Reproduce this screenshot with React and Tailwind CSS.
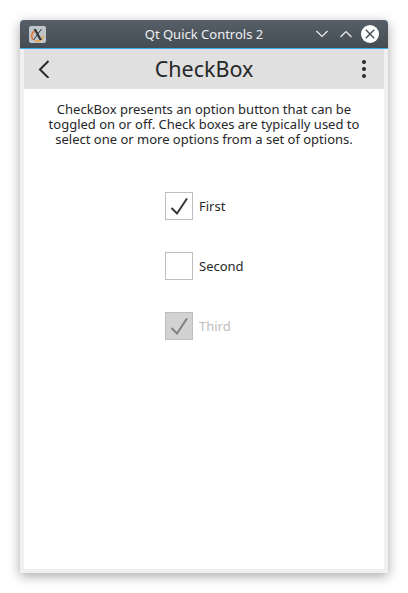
export default function App() {
  const Box = ({ checked, disabled }) => (
    <div className={`w-[28px] h-[28px] border flex items-center justify-center ${disabled ? "bg-[#d2d2d2] border-[#bdbdbd]" : "bg-white border-[#bdbdbd]"}`}>
      {checked && (
        <svg width="26" height="26" viewBox="0 0 26 26" fill="none">
          <path d="M5.5 15 L11 20.5 L21 5.5" stroke={disabled ? "#7f7f7f" : "#353637"} strokeWidth="2" />
        </svg>
      )}
    </div>
  );
  const Row = ({ label, checked, disabled }) => (
    <div className="flex items-center h-[28px] gap-[6px] w-[86px]">
      <Box checked={checked} disabled={disabled} />
      <span className={`text-[13px] leading-[18px] ${disabled ? "text-[#bdbebf]" : "text-[#26282a]"}`}>{label}</span>
    </div>
  );
  return (
    <div className="w-[408px] h-[593px] bg-white pl-[20px] pt-[20px] overflow-hidden" style={{ fontFamily: '"Noto Sans", sans-serif' }}>
      <div className="w-[368px] h-[553px] flex flex-col bg-[#eff0f1] rounded-t-[4px] shadow-[0_3px_12px_rgba(0,0,0,0.35)]">
        <div className="h-[29px] shrink-0 flex items-center pl-[9px] pr-[9px] rounded-t-[4px] border-b border-[#3daee9] bg-gradient-to-b from-[#565f67] to-[#454d54]">
          <div className="w-[17px] h-[17px] rounded-[2px] bg-[#bfc5c8] flex items-center justify-center">
            <svg width="15" height="15" viewBox="0 0 15 15" fill="none">
              <path d="M3 12.5 A5.5 5.5 0 0 1 4.5 4" stroke="#e8762d" strokeWidth="1.5" />
              <path d="M13 8.5 A5.5 5.5 0 0 1 5 13.5" stroke="#eda43a" strokeWidth="1.5" />
              <path d="M3.5 2 L6 2 L12 13 L9.5 13 Z" fill="#33383c" />
              <path d="M11.5 2 L3.5 13" stroke="#33383c" strokeWidth="1" />
            </svg>
          </div>
          <div className="flex-1 text-center text-[13px] leading-[18px] text-[#eff0f1] pl-[46px]">Qt Quick Controls 2</div>
          <svg width="12" height="8" viewBox="0 0 12 8" fill="none" className="mr-[12px]">
            <path d="M0.5 1 L6 6.5 L11.5 1" stroke="#eff0f1" strokeWidth="1.2" />
          </svg>
          <svg width="12" height="8" viewBox="0 0 12 8" fill="none" className="mr-[9px]">
            <path d="M0.5 7 L6 1.5 L11.5 7" stroke="#eff0f1" strokeWidth="1.2" />
          </svg>
          <div className="w-[18px] h-[18px] rounded-full bg-white flex items-center justify-center">
            <svg width="10" height="10" viewBox="0 0 10 10" fill="none">
              <path d="M0.8 0.8 L9.2 9.2 M9.2 0.8 L0.8 9.2" stroke="#454d54" strokeWidth="1.4" />
            </svg>
          </div>
        </div>
        <div className="flex-1 mx-[4px] mb-[4px] flex flex-col bg-white">
          <div className="h-[40px] shrink-0 flex items-center bg-[#e0e0e0]">
            <div className="w-[40px] flex justify-center">
              <svg width="12" height="18" viewBox="0 0 12 18" fill="none">
                <path d="M10.5 1 L2 9.5 L10.5 18" stroke="#26282a" strokeWidth="2" />
              </svg>
            </div>
            <div className="flex-1 text-center text-[21.5px] leading-[28px] text-[#26282a]">CheckBox</div>
            <div className="w-[40px] flex flex-col items-center gap-[3px]">
              <div className="w-[4px] h-[4px] rounded-full bg-[#26282a]" />
              <div className="w-[4px] h-[4px] rounded-full bg-[#26282a]" />
              <div className="w-[4px] h-[4px] rounded-full bg-[#26282a]" />
            </div>
          </div>
          <p className="mt-[13px] text-center text-[13px] leading-[15px] text-[#26282a] px-[20px]">
            CheckBox presents an option button that can be toggled on or off. Check boxes are typically used to select one or more options from a set of options.
          </p>
          <div className="mt-[45px] flex flex-col items-center gap-[32px] pl-[8px]">
            <Row label="First" checked />
            <Row label="Second" />
            <Row label="Third" checked disabled />
          </div>
        </div>
      </div>
    </div>
  );
}
